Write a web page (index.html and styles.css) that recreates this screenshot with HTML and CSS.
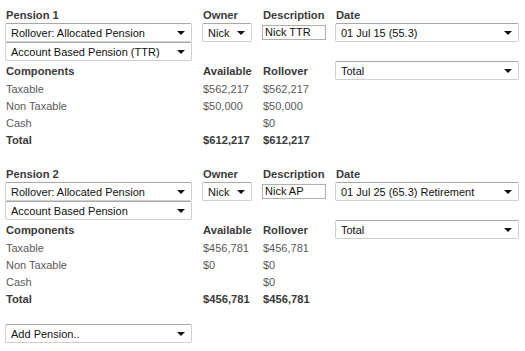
FILE: index.html
```html
<!DOCTYPE html>
<html>
<head>
<meta charset="utf-8">
<link rel="stylesheet" href="styles.css">
</head>
<body>
<div class="page">
  <section class="pension">
    <div class="h">Pension 1</div>
    <div class="h">Owner</div>
    <div class="h">Description</div>
    <div class="h">Date</div>

    <div class="sel w-main"><span>Rollover: Allocated Pension</span><svg class="arr" width="8" height="4" viewBox="0 0 8 4"><path d="M0 0H8L4 4Z"/></svg></div>
    <div class="sel w-owner"><span>Nick</span><svg class="arr" width="8" height="4" viewBox="0 0 8 4"><path d="M0 0H8L4 4Z"/></svg></div>
    <div class="cell-in"><div class="inp">Nick TTR</div></div>
    <div class="sel w-date"><span>01 Jul 15 (55.3)</span><svg class="arr" width="8" height="4" viewBox="0 0 8 4"><path d="M0 0H8L4 4Z"/></svg></div>

    <div class="sel w-main"><span>Account Based Pension (TTR)</span><svg class="arr" width="8" height="4" viewBox="0 0 8 4"><path d="M0 0H8L4 4Z"/></svg></div>
    <div class="span3"></div>

    <div class="h">Components</div>
    <div class="h">Available</div>
    <div class="h">Rollover</div>
    <div class="sel w-date"><span>Total</span><svg class="arr" width="8" height="4" viewBox="0 0 8 4"><path d="M0 0H8L4 4Z"/></svg></div>

    <div class="t">Taxable</div><div class="t">$562,217</div><div class="t">$562,217</div><div></div>
    <div class="t">Non Taxable</div><div class="t">$50,000</div><div class="t">$50,000</div><div></div>
    <div class="t">Cash</div><div class="t"></div><div class="t">$0</div><div></div>
    <div class="h">Total</div><div class="h">$612,217</div><div class="h">$612,217</div><div></div>
  </section>

  <section class="pension">
    <div class="h">Pension 2</div>
    <div class="h">Owner</div>
    <div class="h">Description</div>
    <div class="h">Date</div>

    <div class="sel w-main"><span>Rollover: Allocated Pension</span><svg class="arr" width="8" height="4" viewBox="0 0 8 4"><path d="M0 0H8L4 4Z"/></svg></div>
    <div class="sel w-owner"><span>Nick</span><svg class="arr" width="8" height="4" viewBox="0 0 8 4"><path d="M0 0H8L4 4Z"/></svg></div>
    <div class="cell-in"><div class="inp">Nick AP</div></div>
    <div class="sel w-date"><span>01 Jul 25 (65.3) Retirement</span><svg class="arr" width="8" height="4" viewBox="0 0 8 4"><path d="M0 0H8L4 4Z"/></svg></div>

    <div class="sel w-main"><span>Account Based Pension</span><svg class="arr" width="8" height="4" viewBox="0 0 8 4"><path d="M0 0H8L4 4Z"/></svg></div>
    <div class="span3"></div>

    <div class="h">Components</div>
    <div class="h">Available</div>
    <div class="h">Rollover</div>
    <div class="sel w-date"><span>Total</span><svg class="arr" width="8" height="4" viewBox="0 0 8 4"><path d="M0 0H8L4 4Z"/></svg></div>

    <div class="t">Taxable</div><div class="t">$456,781</div><div class="t">$456,781</div><div></div>
    <div class="t">Non Taxable</div><div class="t">$0</div><div class="t">$0</div><div></div>
    <div class="t">Cash</div><div class="t"></div><div class="t">$0</div><div></div>
    <div class="h">Total</div><div class="h">$456,781</div><div class="h">$456,781</div><div></div>
  </section>

  <div class="add">
    <div class="sel w-main"><span>Add Pension..</span><svg class="arr" width="8" height="4" viewBox="0 0 8 4"><path d="M0 0H8L4 4Z"/></svg></div>
  </div>
</div>
</body>
</html>
```
FILE: styles.css
```css
html, body {
  margin: 0;
  padding: 0;
  background: #fff;
}
body {
  font-family: "Liberation Sans", Arial, sans-serif;
  font-size: 11px;
  color: #555;
}
.page {
  padding: 6px 0 0 5px;
  display: flex;
  flex-direction: column;
  gap: 17px;
}
.pension {
  display: grid;
  grid-template-columns: 197px 60px 73px 184px;
  grid-template-rows: 17px 19px 19px 19px 17px 17px 17px 17px;
}
.h {
  font-weight: bold;
  font-size: 11.2px;
  color: #3a3a3a;
  display: flex;
  align-items: center;
  padding-left: 1px;
  white-space: nowrap;
}
.t {
  display: flex;
  align-items: center;
  padding-left: 1px;
  color: #5a5a5a;
  white-space: nowrap;
}
.sel {
  box-sizing: border-box;
  height: 19px;
  border: 1px solid #d0d0d0;
  border-top-color: #a8a8a8;
  border-radius: 2px;
  background: #fff;
  display: flex;
  align-items: center;
  justify-content: space-between;
  padding: 0 6px 0 5px;
  color: #111;
  font-size: 11px;
  white-space: nowrap;
}
.sel .arr {
  flex: none;
  fill: #111;
  margin-top: 1px;
}
.w-main { width: 187px; }
.w-owner { width: 50px; padding-right: 6px; }
.w-date { width: 184px; }
.cell-in {
  display: flex;
  align-items: center;
}
.inp {
  box-sizing: border-box;
  width: 64px;
  height: 15px;
  border: 1px solid #b0b0b0;
  padding: 0 2px;
  color: #111;
  font-size: 11px;
  line-height: 13px;
  white-space: nowrap;
}
.span3 {
  grid-column: span 3;
}
.add {
  display: flex;
}
```
